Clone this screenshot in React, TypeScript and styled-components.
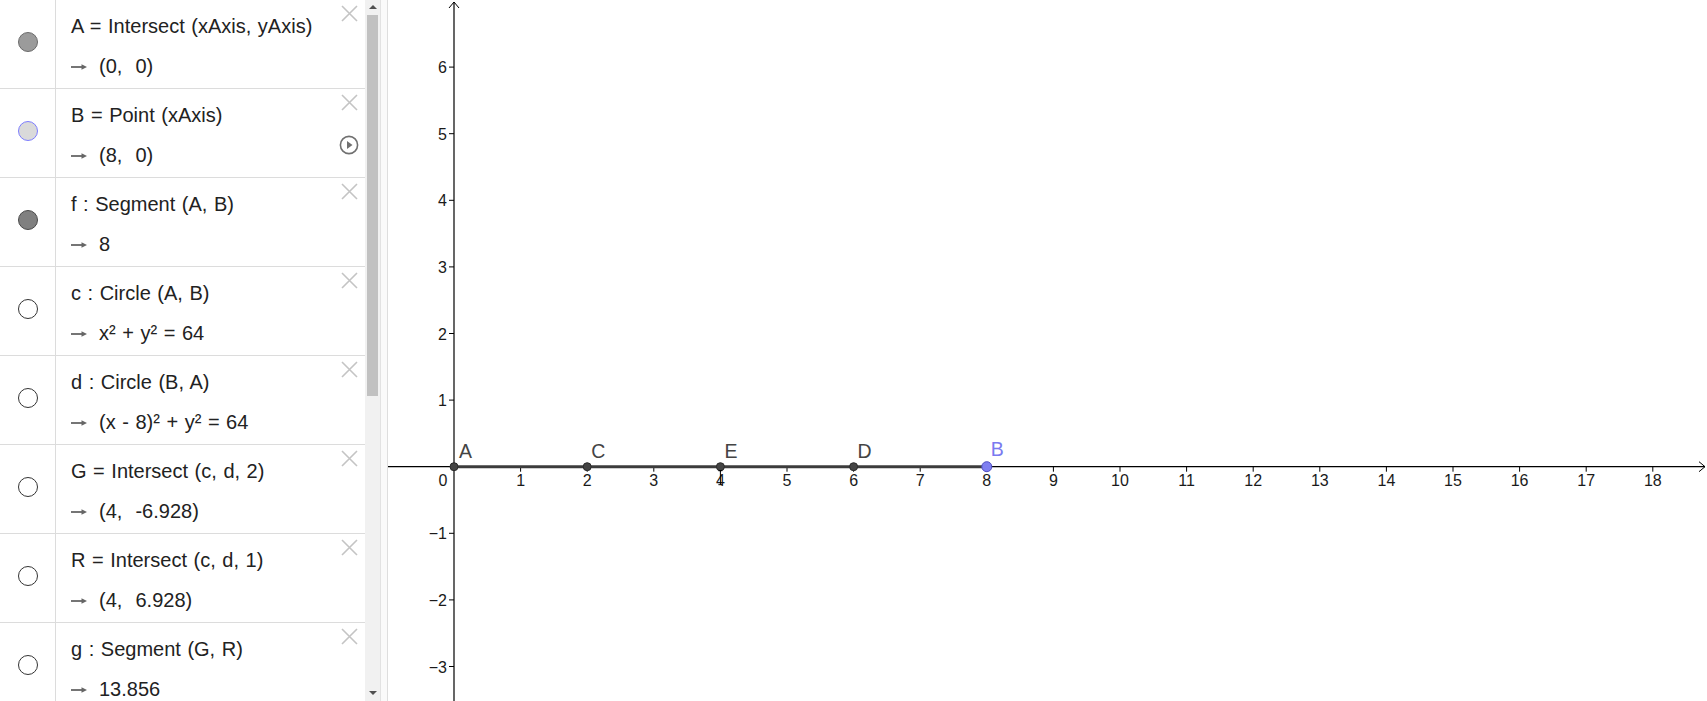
import styled, { createGlobalStyle } from 'styled-components';

const GlobalStyle = createGlobalStyle`
  html, body {
    margin: 0;
    padding: 0;
    background: #ffffff;
    overflow: hidden;
  }
  * { box-sizing: border-box; }
`;

type MarbleKind = 'gray' | 'blue' | 'dark' | 'empty';

const rows: { marble: MarbleKind; def: string; out: string; play?: boolean }[] = [
  { marble: 'gray', def: 'A = Intersect (xAxis, yAxis)', out: '(0,  0)' },
  { marble: 'blue', def: 'B = Point (xAxis)', out: '(8,  0)', play: true },
  { marble: 'dark', def: 'f : Segment (A, B)', out: '8' },
  { marble: 'empty', def: 'c : Circle (A, B)', out: 'x² + y² = 64' },
  { marble: 'empty', def: 'd : Circle (B, A)', out: '(x - 8)² + y² = 64' },
  { marble: 'empty', def: 'G = Intersect (c, d, 2)', out: '(4,  -6.928)' },
  { marble: 'empty', def: 'R = Intersect (c, d, 1)', out: '(4,  6.928)' },
  { marble: 'empty', def: 'g : Segment (G, R)', out: '13.856' },
];

const marbleColors: Record<MarbleKind, { fill: string; border: string }> = {
  gray: { fill: '#9b9b9b', border: '#6b6b6b' },
  blue: { fill: '#dadada', border: '#7d7dff' },
  dark: { fill: '#808080', border: '#4a4a4a' },
  empty: { fill: '#ffffff', border: '#333333' },
};

// graphics view geometry
const VIEW_W = 1319;
const VIEW_H = 701;
const OX = 66;
const OY = 466.7;
const UNIT = 66.6;

const xTicks = Array.from({ length: 18 }, (_, i) => i + 1);
const yTicks = [6, 5, 4, 3, 2, 1, -1, -2, -3];

const points = [
  { name: 'A', x: 0, dx: 5 },
  { name: 'C', x: 2, dx: 4 },
  { name: 'E', x: 4, dx: 4 },
  { name: 'D', x: 6, dx: 4 },
];

export default function App() {
  return (
    <>
      <GlobalStyle />
      <Page>
        <AlgebraPanel>
          <RowList>
            {rows.map((row) => (
              <Row key={row.def}>
                <MarbleCell>
                  <Marble $kind={row.marble} />
                </MarbleCell>
                <Content>
                  <Definition>{row.def}</Definition>
                  <Output>
                    <Arrow width="16" height="8" viewBox="0 0 16 8">
                      <path d="M0 4 H12" stroke="#666" strokeWidth="1.8" />
                      <path d="M10.5 1.2 L16 4 L10.5 6.8 Z" fill="#666" />
                    </Arrow>
                    <span>{row.out}</span>
                  </Output>
                </Content>
                <Controls>
                  <CloseButton>
                    <svg width="17" height="17" viewBox="0 0 17 17">
                      <path d="M1 1 L16 16 M16 1 L1 16" stroke="#c4c4c4" strokeWidth="1.6" />
                    </svg>
                  </CloseButton>
                  {row.play && (
                    <PlayButton>
                      <svg width="20" height="20" viewBox="0 0 20 20">
                        <circle cx="10" cy="10" r="8.6" fill="none" stroke="#707070" strokeWidth="1.6" />
                        <path d="M8 6 L13.5 10 L8 14 Z" fill="#707070" />
                      </svg>
                    </PlayButton>
                  )}
                </Controls>
              </Row>
            ))}
          </RowList>
          <ScrollTrack>
            <ScrollArrow $up />
            <ThumbArea>
              <Thumb />
            </ThumbArea>
            <ScrollArrow />
          </ScrollTrack>
        </AlgebraPanel>
        <Divider />
        <GraphicsView>
          <svg width={VIEW_W} height={VIEW_H} viewBox={`0 0 ${VIEW_W} ${VIEW_H}`}>
            {/* axes */}
            <line x1={0} y1={OY} x2={VIEW_W - 2} y2={OY} stroke="#000" strokeWidth={1.2} />
            <path
              d={`M${VIEW_W - 8} ${OY - 5} L${VIEW_W - 2} ${OY} L${VIEW_W - 8} ${OY + 5}`}
              fill="none"
              stroke="#000"
              strokeWidth={1}
            />
            <line x1={OX} y1={VIEW_H} x2={OX} y2={2} stroke="#000" strokeWidth={1.2} />
            <path
              d={`M${OX - 5} 8 L${OX} 2 L${OX + 5} 8`}
              fill="none"
              stroke="#000"
              strokeWidth={1}
            />

            {xTicks.map((n) => {
              const x = OX + n * UNIT;
              return (
                <g key={`x${n}`}>
                  <line x1={x} y1={OY} x2={x} y2={OY + 5} stroke="#000" strokeWidth={1} />
                  <AxisLabel x={x} y={OY + 19} textAnchor="middle">
                    {n}
                  </AxisLabel>
                </g>
              );
            })}
            <AxisLabel x={OX - 11} y={OY + 19} textAnchor="middle">
              0
            </AxisLabel>

            {yTicks.map((n) => {
              const y = OY - n * UNIT;
              return (
                <g key={`y${n}`}>
                  <line x1={OX - 5} y1={y} x2={OX} y2={y} stroke="#000" strokeWidth={1} />
                  <AxisLabel x={OX - 7} y={y + 6} textAnchor="end">
                    {n < 0 ? `−${-n}` : n}
                  </AxisLabel>
                </g>
              );
            })}

            {/* segment f */}
            <line x1={OX} y1={OY} x2={OX + 8 * UNIT} y2={OY} stroke="#3c3c3c" strokeWidth={3} />

            {points.map((p) => (
              <g key={p.name}>
                <circle cx={OX + p.x * UNIT} cy={OY} r={4} fill="#444444" stroke="#2a2a2a" strokeWidth={1} />
                <PointLabel x={OX + p.x * UNIT + p.dx} y={OY - 9} fill="#444444">
                  {p.name}
                </PointLabel>
              </g>
            ))}

            <circle cx={OX + 8 * UNIT} cy={OY} r={5} fill="#7f7ff0" stroke="#4f4fc4" strokeWidth={1} />
            <PointLabel x={OX + 8 * UNIT + 4} y={OY - 11} fill="#7a7af0">
              B
            </PointLabel>

            {/* text cursor near E */}
            <path
              d={`M${OX + 4 * UNIT - 2} ${OY + 4} L${OX + 4 * UNIT + 2} ${OY + 4} M${OX + 4 * UNIT} ${OY + 4} L${OX + 4 * UNIT} ${OY + 18} M${OX + 4 * UNIT - 2} ${OY + 18} L${OX + 4 * UNIT + 2} ${OY + 18}`}
              stroke="#000"
              strokeWidth={1}
              fill="none"
            />
          </svg>
        </GraphicsView>
      </Page>
    </>
  );
}

const Page = styled.div`
  display: flex;
  width: 1707px;
  height: 701px;
  overflow: hidden;
  background: #ffffff;
`;

const AlgebraPanel = styled.div`
  display: flex;
  width: 380px;
  height: 701px;
  flex-shrink: 0;
  overflow: hidden;
`;

const RowList = styled.div`
  display: flex;
  flex-direction: column;
  width: 365px;
  flex-shrink: 0;
`;

const Row = styled.div`
  display: grid;
  grid-template-columns: 56px 1fr 26px;
  height: 89px;
  flex-shrink: 0;
  border-bottom: 1px solid #dcdcdc;
`;

const MarbleCell = styled.div`
  display: flex;
  align-items: center;
  justify-content: center;
  padding-bottom: 5px;
  border-right: 1px solid #dcdcdc;
`;

const Marble = styled.div<{ $kind: MarbleKind }>`
  width: 20px;
  height: 20px;
  border-radius: 50%;
  background: ${({ $kind }) => marbleColors[$kind].fill};
  border: 1px solid ${({ $kind }) => marbleColors[$kind].border};
`;

const Content = styled.div`
  display: flex;
  flex-direction: column;
  gap: 12px;
  padding: 12px 0 0 15px;
  font-family: 'Liberation Sans', Arial, sans-serif;
  font-size: 20px;
  color: #222222;
  white-space: pre;
  word-spacing: 1px;
`;

const Definition = styled.div`
  line-height: 28px;
`;

const Output = styled.div`
  display: flex;
  align-items: center;
  gap: 12px;
  line-height: 28px;
`;

const Arrow = styled.svg`
  display: block;
  flex-shrink: 0;
  margin-top: 1px;
`;

const Controls = styled.div`
  display: flex;
  flex-direction: column;
  align-items: flex-start;
  padding-top: 5px;
`;

const CloseButton = styled.div`
  width: 17px;
  height: 17px;
  margin-left: 2px;
`;

const PlayButton = styled.div`
  width: 20px;
  height: 20px;
  margin-top: 24px;
  margin-left: 0;
`;

const ScrollTrack = styled.div`
  display: flex;
  flex-direction: column;
  align-items: center;
  width: 15px;
  height: 701px;
  background: #f1f1f1;
`;

const ScrollArrow = styled.div<{ $up?: boolean }>`
  width: 0;
  height: 0;
  margin: ${({ $up }) => ($up ? '5px 0 4px' : 'auto 0 6px')};
  border-left: 4px solid transparent;
  border-right: 4px solid transparent;
  ${({ $up }) => ($up ? 'border-bottom: 4px solid #505050;' : 'border-top: 4px solid #505050;')}
`;

const ThumbArea = styled.div`
  display: flex;
  justify-content: center;
  width: 100%;
`;

const Thumb = styled.div`
  width: 11px;
  height: 381px;
  margin-top: 2px;
  background: #c1c1c1;
`;

const Divider = styled.div`
  width: 8px;
  height: 701px;
  flex-shrink: 0;
  background: #fafafa;
  border-left: 1px solid #e2e2e2;
  border-right: 1px solid #dedede;
`;

const GraphicsView = styled.div`
  flex: 1;
  height: 701px;
  background: #ffffff;
  overflow: hidden;
  svg { display: block; }
`;

const AxisLabel = styled.text`
  font-family: 'Liberation Sans', Arial, sans-serif;
  font-size: 16px;
  fill: #1a1a1a;
`;

const PointLabel = styled.text`
  font-family: 'Liberation Sans', Arial, sans-serif;
  font-size: 19.5px;
`;
